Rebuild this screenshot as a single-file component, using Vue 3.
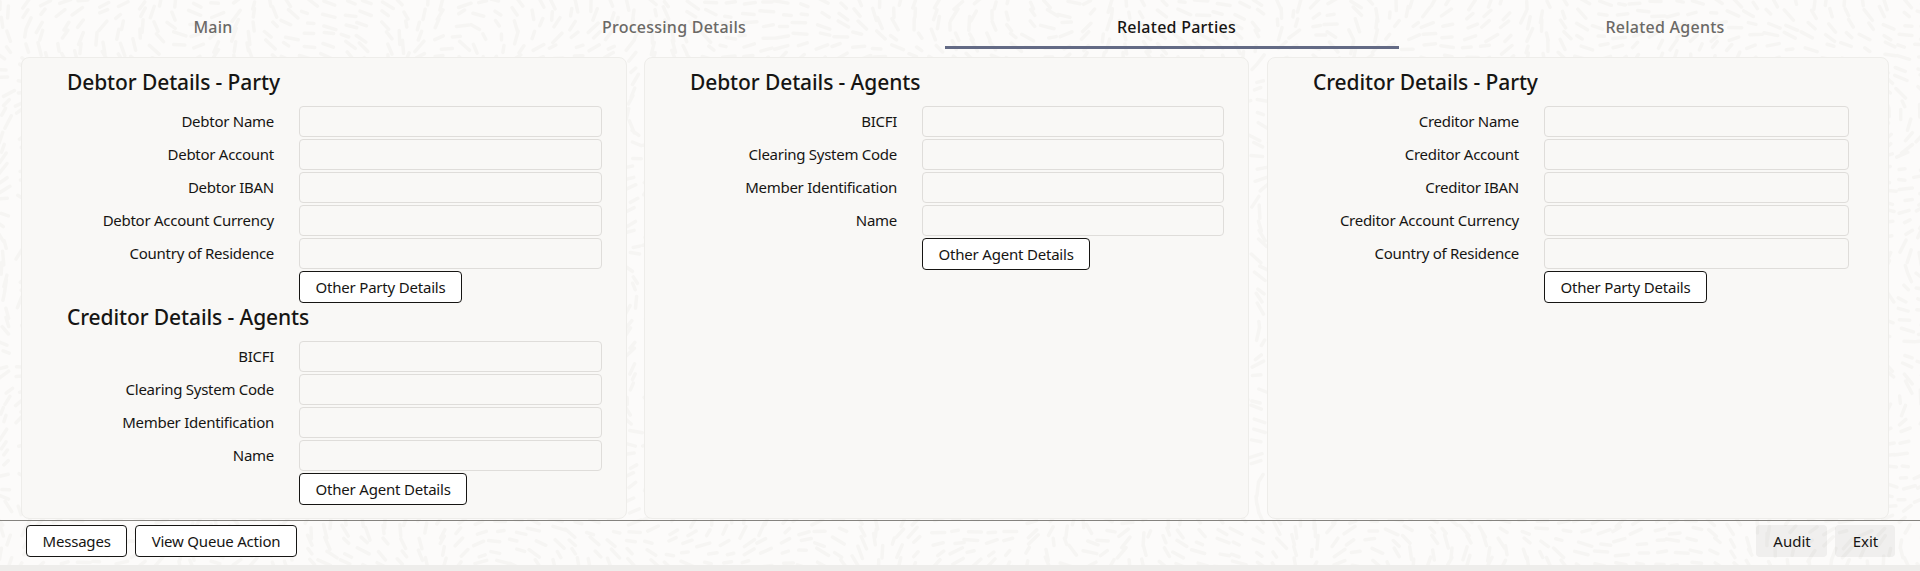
<template>
  <div class="page">
    <!-- background texture -->
    <svg class="texture" width="1920" height="571" aria-hidden="true">
      <path :d="texturePath" />
    </svg>

    <nav class="tabs">
      <div
        v-for="tab in tabs"
        :key="tab.label"
        class="tab"
        :class="[tab.cls, { active: tab.active }]"
      >{{ tab.label }}</div>
    </nav>

    <main class="panels">
      <section v-for="(panel, i) in panels" :key="i" class="panel" :class="'panel-' + i">
        <div v-for="group in panel" :key="group.title" class="group">
          <h2 class="group-title">{{ group.title }}</h2>
          <div v-for="field in group.fields" :key="field" class="row">
            <label class="row-label">{{ field }}</label>
            <input class="row-input" type="text" readonly />
          </div>
          <div class="row-action">
            <button class="btn" type="button">{{ group.action }}</button>
          </div>
        </div>
      </section>
    </main>

    <footer class="footer">
      <div class="footer-side">
        <button class="btn btn-foot" type="button">Messages</button>
        <button class="btn btn-foot" type="button">View Queue Action</button>
      </div>
      <div class="footer-side footer-right">
        <button class="btn-flat audit" type="button">Audit</button>
        <button class="btn-flat exit" type="button">Exit</button>
      </div>
    </footer>
    <div class="bottom-bar"></div>
  </div>
</template>

<script setup>
const tabs = [
  { label: 'Main', cls: 'tab-main' },
  { label: 'Processing Details', cls: 'tab-processing' },
  { label: 'Related Parties', cls: 'tab-parties', active: true },
  { label: 'Related Agents', cls: 'tab-agents' },
]

const agentFields = ['BICFI', 'Clearing System Code', 'Member Identification', 'Name']

const panels = [
  [
    {
      title: 'Debtor Details - Party',
      fields: ['Debtor Name', 'Debtor Account', 'Debtor IBAN', 'Debtor Account Currency', 'Country of Residence'],
      action: 'Other Party Details',
    },
    { title: 'Creditor Details - Agents', fields: agentFields, action: 'Other Agent Details' },
  ],
  [{ title: 'Debtor Details - Agents', fields: agentFields, action: 'Other Agent Details' }],
  [
    {
      title: 'Creditor Details - Party',
      fields: ['Creditor Name', 'Creditor Account', 'Creditor IBAN', 'Creditor Account Currency', 'Country of Residence'],
      action: 'Other Party Details',
    },
  ],
]

// short dashes that follow a wavy direction field
function buildTexture() {
  let seed = 7
  const rnd = () => {
    seed = (seed * 16807) % 2147483647
    return seed / 2147483647
  }
  let d = ''
  for (let y = 0; y < 580; y += 11) {
    for (let x = 0; x < 1930; x += 19) {
      const px = x + rnd() * 10
      const py = y + rnd() * 6
      const a = Math.sin(px / 70) * 1.7 + Math.cos(py / 45 + px / 130) * 1.5 + rnd() * 0.4
      const len = 3 + rnd() * 4
      const dx = Math.cos(a) * len
      const dy = Math.sin(a) * len
      d += `M${(px - dx).toFixed(1)} ${(py - dy).toFixed(1)}L${(px + dx).toFixed(1)} ${(py + dy).toFixed(1)}`
    }
  }
  return d
}

const texturePath = buildTexture()
</script>

<style scoped>
.page {
  position: relative;
  width: 1920px;
  height: 571px;
  overflow: hidden;
  background: #fcfbfa;
  color: #161513;
  font-family: "Noto Sans", "Open Sans", sans-serif;
}
.texture {
  position: absolute;
  left: 0;
  top: 0;
}
.texture path {
  fill: none;
  stroke: #f6f5f3;
  stroke-width: 3.5;
  stroke-linecap: round;
}

.tabs {
  position: relative;
  display: flex;
  height: 49px;
}
.tab {
  box-sizing: border-box;
  height: 49px;
  padding-top: 15px;
  text-align: center;
  font-size: 16px;
  line-height: 24px;
  font-weight: 500;
  letter-spacing: 0.25px;
  color: #6b6966;
}
.tab-main { width: 426px; }
.tab-processing { width: 496px; }
.tab-parties {
  width: 454px;
  margin-left: 23px;
  padding-left: 9px;
  border-bottom: 3px solid #636a85;
}
.tab-agents { width: 521px; padding-left: 11px; }
.tab.active { color: #161513; }

.panels {
  position: relative;
  display: flex;
  height: 463px;
  margin-top: 8px;
  padding-left: 21px;
  overflow: hidden;
}
.panel {
  box-sizing: border-box;
  height: 462px;
  padding-top: 5px;
  background: #f9f8f6;
  border: 1px solid #eeedea;
  border-radius: 8px;
}
.panel-0 { width: 606px; padding-left: 45px; }
.panel-1 { width: 605px; padding-left: 45px; margin-left: 17px; }
.panel-2 { width: 622px; padding-left: 45px; margin-left: 18px; }

.group-title {
  margin: 0;
  height: 43px;
  font-size: 21px;
  line-height: 38px;
  font-weight: 500;
  letter-spacing: -0.1px;
  color: #161513;
}
.group + .group .group-title {
  height: 38px;
  line-height: 28px;
}

.row {
  display: flex;
  align-items: center;
  height: 31px;
  margin-bottom: 2px;
}
.row-label {
  width: 207px;
  margin-right: 25px;
  padding-bottom: 2px;
  text-align: right;
  font-size: 15px;
  letter-spacing: -0.27px;
  color: #161513;
}
.row-input {
  box-sizing: border-box;
  width: 303px;
  height: 31px;
  padding: 0 8px;
  background: #f9f8f6;
  border: 1px solid #dfddda;
  border-radius: 4px;
  outline: none;
}
.panel-1 .row-input { width: 302px; }
.panel-2 .row-label { width: 206px; margin-right: 25px; }
.panel-2 .row-input { width: 305px; }

.row-action {
  display: flex;
  height: 32px;
  padding-left: 232px;
}
.panel-2 .row-action { padding-left: 231px; }

.btn {
  box-sizing: border-box;
  height: 32px;
  padding: 0 15.5px 1px;
  background: #fff;
  border: 1px solid #161513;
  border-radius: 4px;
  font-family: inherit;
  font-size: 15px;
  letter-spacing: -0.2px;
  color: #161513;
  white-space: nowrap;
}

.footer {
  position: relative;
  box-sizing: border-box;
  display: flex;
  justify-content: space-between;
  height: 45px;
  padding: 4px 25px 9px 26px;
  border-top: 1px solid #85837f;
}
.footer-side {
  display: flex;
  gap: 8px;
}
.btn-foot {
  height: 32px;
}
.btn-flat {
  box-sizing: border-box;
  height: 32px;
  padding: 0 0 1px 1px;
  background: rgba(22, 21, 19, 0.05);
  border: none;
  border-radius: 4px;
  font-family: inherit;
  font-size: 15px;
  color: #161513;
}
.audit { width: 71px; }
.exit { width: 60px; }

.bottom-bar {
  position: relative;
  height: 6px;
  background: #eeedeb;
}
</style>

<style>
html, body { margin: 0; padding: 0; }
</style>
